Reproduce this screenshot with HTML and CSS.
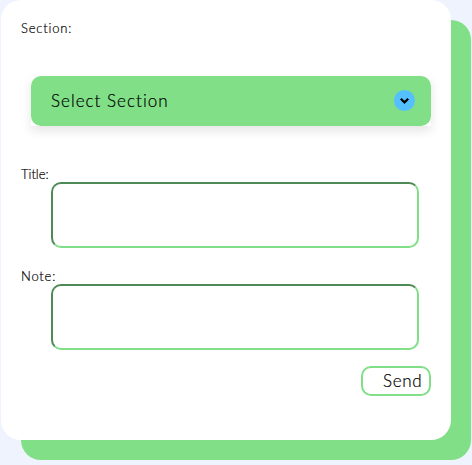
FILE: index.html
```html
<!DOCTYPE html>
<html lang="en">
<head>
<meta charset="utf-8">
<title>Add note</title>
<link rel="stylesheet" href="styles.css">
</head>
<body>
<form class="card">
  <div class="label"><span class="section-text">Section:</span></div>
  <div class="select-wrap">
    <div class="select">
      <span class="select-text">Select Section</span>
      <svg class="arrow" viewBox="0 0 22 22" width="22" height="22">
        <circle cx="10.5" cy="10.5" r="10.5" fill="#54c0ff"/>
        <path d="M6.8 8.7 L10.5 12.4 L14.2 8.7" fill="none" stroke="#000" stroke-width="2.2"/>
      </svg>
    </div>
  </div>
  <div class="label"><span class="title-text">Title:</span></div>
  <div class="field"></div>
  <div class="label"><span class="note-text">Note:</span></div>
  <div class="field"></div>
  <div class="send"><span class="send-text">Send</span></div>
</form>
</body>
</html>
```
FILE: styles.css
```css
* { box-sizing: border-box; }
html, body { margin: 0; height: 100%; overflow: hidden; }
body {
  background: #eff3fd;
  color: #000;
  font-family: "Century Gothic", Lato, sans-serif;
  font-weight: 300;
  -webkit-text-stroke: 0.2px #000;
}
.card {
  display: flex;
  flex-direction: column;
  width: 450px;
  height: 440px;
  margin-left: 1px;
  padding: 20px;
  background: #fff;
  border-radius: 20px;
  box-shadow: 20px 20px 0 #80df87;
}
.label {
  height: 16px;
  font-size: 13px;
  line-height: 16px;
  white-space: nowrap;
}
.section-text { letter-spacing: 0.8px; }
.title-text { letter-spacing: 0; }
.note-text { letter-spacing: 0.8px; }
.select-wrap {
  width: 400px;
  height: 50px;
  margin: 40px 0 40px 10px;
  background: #fff;
  box-shadow: 0 5px 10px rgba(0, 0, 0, 0.1);
}
.select {
  display: flex;
  align-items: center;
  justify-content: space-between;
  height: 50px;
  padding: 0 15px 0 20px;
  background: #80df87;
  border-radius: 10px;
}
.select-text {
  font-size: 17px;
  line-height: 22px;
  letter-spacing: 1.02px;
}
.arrow { display: block; margin-bottom: 1px; }
.field {
  width: 368px;
  height: 66px;
  margin: 0 0 20px 30px;
  border: 2px solid;
  border-color: #4d8a56 #80df87 #80df87 #4d8a56;
  border-radius: 10px;
}
.send {
  display: flex;
  align-items: center;
  width: 70px;
  height: 30px;
  margin: -4px 0 0 340px;
  padding: 0 0 1px 20px;
  border: 2px solid #80df87;
  border-radius: 10px;
}
.send-text { font-size: 17px; letter-spacing: 0.7px; }
```
